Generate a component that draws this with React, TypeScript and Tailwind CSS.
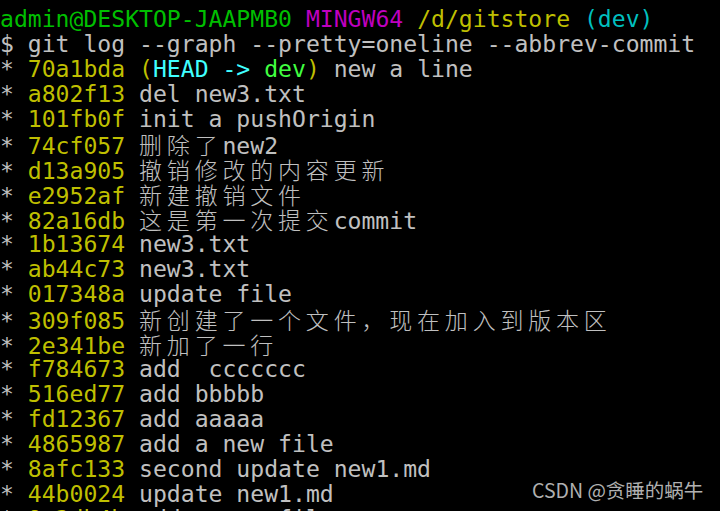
import React from "react";

type Seg = [string, string];

const Y = "text-[#bfbf00]";
const W = "text-[#c0c0c0]";

const commits: [string, string][] = [
  ["a802f13", "del new3.txt"],
  ["101fb0f", "init a pushOrigin"],
  ["74cf057", "删除了new2"],
  ["d13a905", "撤销修改的内容更新"],
  ["e2952af", "新建撤销文件"],
  ["82a16db", "这是第一次提交commit"],
  ["1b13674", "new3.txt"],
  ["ab44c73", "new3.txt"],
  ["017348a", "update file"],
  ["309f085", "新创建了一个文件，现在加入到版本区"],
  ["2e341be", "新加了一行"],
  ["f784673", "add  ccccccc"],
  ["516ed77", "add bbbbb"],
  ["fd12367", "add aaaaa"],
  ["4865987", "add a new file"],
  ["8afc133", "second update new1.md"],
  ["44b0024", "update new1.md"],
  ["8c3db4b", "add a new file"],
];

const isCJK = (c: string) => /[\u3000-\u9fff\uff00-\uffef]/.test(c);

function Text({ text, cls }: { text: string; cls: string }) {
  const runs: { cjk: boolean; s: string }[] = [];
  for (const ch of text) {
    const c = isCJK(ch);
    const last = runs[runs.length - 1];
    if (last && last.cjk === c) last.s += ch;
    else runs.push({ cjk: c, s: ch });
  }
  return (
    <span className={cls}>
      {runs.map((r, i) =>
        r.cjk ? (
          <span
            key={i}
            className="text-[23px] tracking-[4.8px] leading-[25px] font-['Noto_Sans_CJK_SC',sans-serif] font-light"
          >
            {r.s}
          </span>
        ) : (
          <span key={i}>{r.s}</span>
        )
      )}
    </span>
  );
}

function Line({ segs }: { segs: Seg[] }) {
  return (
    <div className="h-[25px] leading-[25px] whitespace-pre">
      {segs.map(([t, c], i) => (
        <Text key={i} text={t} cls={c} />
      ))}
    </div>
  );
}

export default function App() {
  return (
    <div className="relative w-[720px] h-[511px] overflow-hidden bg-black pt-[7px] font-['DejaVu_Sans_Mono',monospace] text-[23.1px]">
      <Line
        segs={[
          ["admin@DESKTOP-JAAPMB0 ", "text-[#00bf00]"],
          ["MINGW64 ", "text-[#bf00bf]"],
          ["/d/gitstore ", Y],
          ["(dev)", "text-[#00bfbf]"],
        ]}
      />
      <Line segs={[["$ git log --graph --pretty=oneline --abbrev-commit", W]]} />
      <Line
        segs={[
          ["* ", W],
          ["70a1bda ", Y],
          ["(", Y],
          ["HEAD -> ", "text-[#40ffff]"],
          ["dev", "text-[#40ff40]"],
          [")", Y],
          [" new a line", W],
        ]}
      />
      {commits.map(([h, m]) => (
        <Line key={h + m} segs={[["* ", W], [h + " ", Y], [m, W]]} />
      ))}
      <div className="absolute left-[532px] top-[477px] text-[19.5px] leading-[25px] text-[#b0b0b0] font-['Noto_Sans_CJK_SC',sans-serif] whitespace-pre">
        CSDN @贪睡的蜗牛
      </div>
    </div>
  );
}
